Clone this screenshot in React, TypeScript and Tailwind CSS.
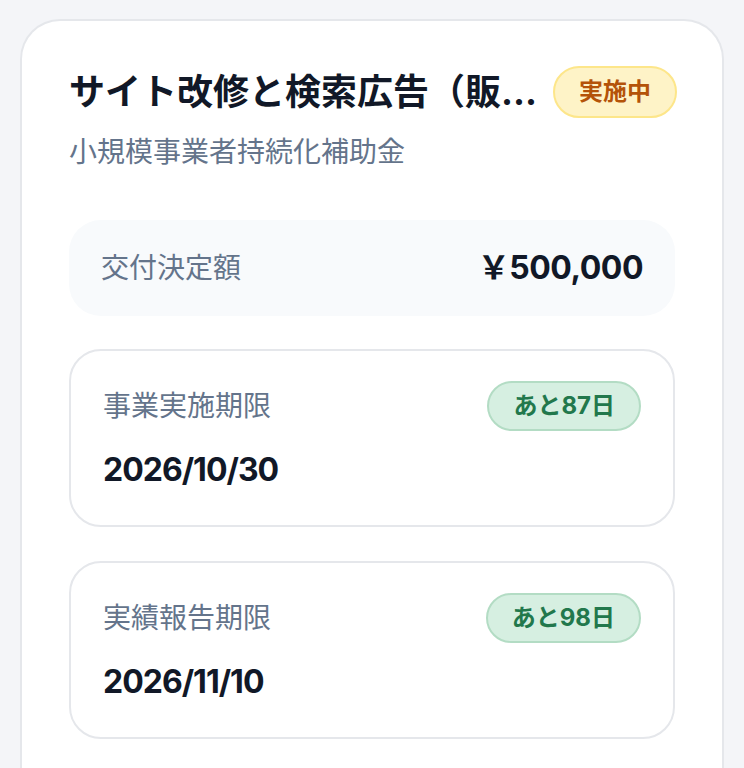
const FONT = { fontFamily: '"Inter", "Noto Sans CJK JP", sans-serif' }

type Deadline = {
    label: string
    date: string
    daysLeft: number
}

const deadlines: Deadline[] = [
    { label: '事業実施期限', date: '2026/10/30', daysLeft: 87 },
    { label: '実績報告期限', date: '2026/11/10', daysLeft: 98 },
]

function DeadlineCard({ item }: { item: Deadline }) {
    return (
        <div className="rounded-[32px] border-2 border-[#e5e7eb] bg-white px-[32px] pt-[30px] pb-[33px]">
            <div className="flex items-center justify-between">
                <span className="text-[28px] leading-[40px] text-[#64748b]">{item.label}</span>
                <span className="inline-flex h-[50px] items-center rounded-full border-2 border-[#b3dcc4] bg-[#d6efe1] px-[24px] text-[24px] font-bold text-[#22784c]">
                    あと{item.daysLeft}日
                </span>
            </div>
            <div className="mt-[17px] text-[32px] font-bold leading-[44px] tracking-[-1px] text-[#111827]">
                {item.date}
            </div>
        </div>
    )
}

export default function App() {
    return (
        <div className="h-screen overflow-hidden bg-[#f4f5f8] px-[20px] pt-[19px]" style={FONT}>
            <div className="rounded-t-[40px] border-2 border-b-0 border-[#e5e7eb] bg-white px-[47px] pt-[45px] pb-[60px]">
                <div className="flex items-start gap-[12px]">
                    <div className="min-w-0 flex-1">
                        <h2 className="overflow-hidden whitespace-nowrap text-[36px] font-bold leading-[52px] text-[#111827]">
                            サイト改修と検索広告（販...
                        </h2>
                        <p className="mt-[14px] text-[28px] leading-[40px] text-[#64748b]">
                            小規模事業者持続化補助金
                        </p>
                    </div>
                    <span className="-mr-[2px] inline-flex h-[52px] shrink-0 items-center rounded-full border-2 border-[#fde68a] bg-[#fef3c7] px-[24px] text-[24px] font-bold text-[#b45309]">
                        実施中
                    </span>
                </div>

                <div className="mt-[48px] flex h-[96px] items-center justify-between rounded-[32px] bg-[#f8fafc] px-[32px]">
                    <span className="text-[28px] text-[#64748b]">交付決定額</span>
                    <span className="text-[32px] font-bold tracking-[-0.5px] text-[#111827]">￥500,000</span>
                </div>

                <div className="mt-[33px] flex flex-col gap-[34px]">
                    {deadlines.map((d) => (
                        <DeadlineCard key={d.label} item={d} />
                    ))}
                </div>
            </div>
        </div>
    )
}
